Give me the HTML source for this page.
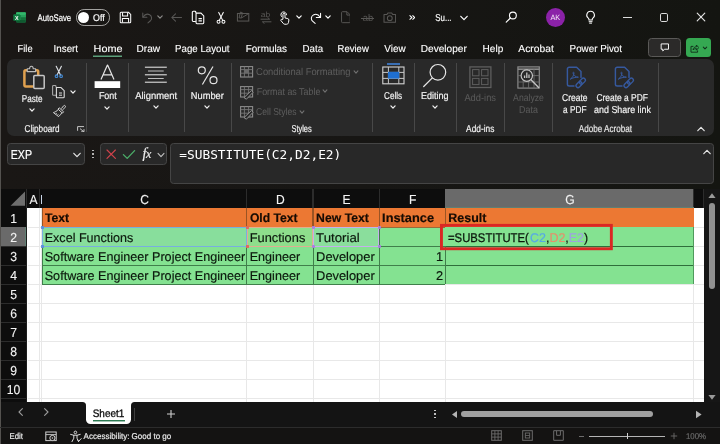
<!DOCTYPE html>
<html lang="en"><head><meta charset="utf-8"><title>Excel - SUBSTITUTE</title>
<style>
html,body{margin:0;padding:0;background:#181614;}
body{width:720px;height:444px;overflow:hidden;position:relative;font-family:"Liberation Sans",sans-serif;}
#app{position:absolute;left:0;top:0;width:720px;height:444px;overflow:hidden;will-change:transform;}
#app div,#app span.t,#app svg{position:absolute;box-sizing:border-box;}
span.t{white-space:nowrap;line-height:1;-webkit-text-stroke:0.18px currentColor;}
</style></head><body><div id="app">
<div style="left:0px;top:0px;width:720px;height:444px;background:linear-gradient(90deg,#1a1715 0%,#171614 50%,#141511 100%);"></div><div style="left:0px;top:0px;width:1px;height:444px;background:#54524f;"></div><svg style="left:13.0px;top:10.6px;" width="13.2" height="12.8" viewBox="0 0 21 17"><rect x="5" y="0.500" width="15.500" height="16" rx="1.600" fill="#1d8a4c"/><rect x="5" y="0.500" width="15.500" height="4" rx="1.200" fill="#33b86c"/><rect x="12.500" y="4.500" width="8" height="4" fill="#27a25c"/><rect x="12.500" y="8.500" width="8" height="4" fill="#15743d"/><rect x="5" y="12.500" width="15.500" height="4" rx="1.200" fill="#0f5a30"/><rect x="0.500" y="3.500" width="10.800" height="10.500" rx="1.400" fill="#107c41"/><text x="5.900" y="12.100" font-family="Liberation Sans, sans-serif" font-weight="bold" font-size="8.600" fill="#fff" text-anchor="middle">X</text></svg><span class="t" style="left:37px;top:13px;font-size:9.7px;transform-origin:0 50%;transform:matrix(0.7988,0,0.001,1,0.60,0);color:#fff;">AutoSave</span><div style="left:75.8px;top:9.4px;width:34.2px;height:16.2px;border:1px solid #a3a2a0;border-radius:8.100px;background:#181614;"></div><div style="left:78.2px;top:12.0px;width:11.2px;height:11.2px;background:#fff;border-radius:50%;"></div><span class="t" style="left:93px;top:13px;font-size:9.7px;transform-origin:0 50%;transform:matrix(0.9091,0,0.001,1,0.10,0);color:#fff;">Off</span><svg style="left:118.50px;top:11.10px;" width="13" height="13" viewBox="0 0 16 16"><path d="M2.500 1.600h9.200l2.700 2.700v9.200a1 1 0 0 1-1 1H2.500a1 1 0 0 1-1-1V2.600a1 1 0 0 1 1-1z" fill="none" stroke="#fff" stroke-width="1.250"/><path d="M4.400 1.800v4.300h6.200V1.800M4.200 14.300V9.200h7.600v5.100" fill="none" stroke="#fff" stroke-width="1.250"/></svg><svg style="left:140.50px;top:10.90px;" width="13" height="13" viewBox="0 0 16 16"><path d="M2.200 2.600v5h5" fill="none" stroke="#585755" stroke-width="1.300" stroke-linecap="round" stroke-linejoin="round"/><path d="M2.600 7.300C4.600 4.200 8 3.200 10.600 4.600c2.800 1.600 3.200 5.200 1 7.400L8.600 14.600" fill="none" stroke="#585755" stroke-width="1.300" stroke-linecap="round"/></svg><svg style="left:154.7px;top:12.0px;" width="10" height="10" viewBox="-5 -5 10 10"><path d="M-2.2 -1.15 L0 1.15 L2.2 -1.15" fill="none" stroke="#8a8987" stroke-width="1.2" stroke-linecap="round" stroke-linejoin="round"/></svg><svg style="left:169.90px;top:10.60px;" width="13" height="13" viewBox="0 0 16 16"><path d="M14.200 8H2.200M6.800 3.400L2.200 8l4.600 4.600" fill="none" stroke="#585755" stroke-width="1.300" stroke-linecap="round" stroke-linejoin="round"/></svg><svg style="left:191.30px;top:9.90px;" width="15" height="15" viewBox="0 0 16 16"><path d="M5.200 3.200V2.400a1 1 0 0 0-1-1H2.400a1 1 0 0 0-1 1v8.800a1 1 0 0 0 1 1h2.800" fill="none" stroke="#fff" stroke-width="1.150"/><path d="M5.400 3.300h5.200l3 3v7.400a1 1 0 0 1-1 1H6.400a1 1 0 0 1-1-1z" fill="#181614" stroke="#fff" stroke-width="1.150"/><path d="M8 9.200h3.600M8 11.600h3.600" stroke="#fff" stroke-width="1.100"/></svg><svg style="left:213.90px;top:10.60px;" width="14" height="14" viewBox="0 0 16 16"><path d="M5.400 1.600l4.700 9.400M10.600 1.600L5.900 11" fill="none" stroke="#fff" stroke-width="1.200" stroke-linecap="round"/><circle cx="5.200" cy="12.400" r="1.700" fill="none" stroke="#fff" stroke-width="1.150"/><circle cx="10.800" cy="12.400" r="1.700" fill="none" stroke="#fff" stroke-width="1.150"/></svg><svg style="left:236.10px;top:9.40px;" width="14.4" height="14.4" viewBox="0 0 16 16"><rect x="1.600" y="5" width="12.600" height="8.400" fill="none" stroke="#585755" stroke-width="1.150"/><path d="M3.400 9.800l1.600-6.400 2.200.8-1.400 5.800zM6 10l7.600-4.600" fill="none" stroke="#585755" stroke-width="1.050"/></svg><span class="t" style="left:260px;top:11px;font-size:7.6px;transform-origin:0 50%;transform:matrix(1.1120,0,0.001,1,0.70,0);color:#585755;-webkit-text-stroke:0;">ab</span><svg style="left:260.20px;top:16.90px;" width="12" height="7" viewBox="0 0 12 7"><path d="M1 2.200h8.600l-1.800-1.600M11 4.800H2.400l1.800 1.600" fill="none" stroke="#585755" stroke-width="1" stroke-linecap="round" stroke-linejoin="round"/></svg><svg style="left:277.90px;top:10.50px;" width="13.4" height="14.2" viewBox="0 0 17 18"><path d="M6.300 10.400V4.300a1.300 1.300 0 0 1 2.600 0v4.500l3.600.9c.9.200 1.400.9 1.300 1.800l-.5 3.200c-.2 1.300-1.200 2.100-2.500 2.100H8.700c-.8 0-1.500-.4-2-1L3.600 12c-.5-.7.300-1.600 1.100-1.200z" fill="none" stroke="#fff" stroke-width="1.250" stroke-linejoin="round"/><path d="M4.400 7a3.600 3.600 0 1 1 6.400-2.200" fill="none" stroke="#fff" stroke-width="1.250" stroke-linecap="round"/></svg><svg style="left:293.7px;top:12.0px;" width="10" height="10" viewBox="-5 -5 10 10"><path d="M-2.2 -1.15 L0 1.15 L2.2 -1.15" fill="none" stroke="#fff" stroke-width="1.2" stroke-linecap="round" stroke-linejoin="round"/></svg><svg style="left:309.30px;top:10.80px;" width="13.6" height="13.6" viewBox="0 0 16 16"><path d="M13.600 2.600v5h-5" fill="none" stroke="#fff" stroke-width="1.250" stroke-linecap="round" stroke-linejoin="round"/><path d="M13.200 7.300C11.200 4.200 7.800 3.200 5.200 4.600c-2.800 1.600-3.200 5.200-1 7.400L7.200 14.600" fill="none" stroke="#fff" stroke-width="1.250" stroke-linecap="round"/></svg><svg style="left:323.3px;top:12.0px;" width="10" height="10" viewBox="-5 -5 10 10"><path d="M-2.2 -1.15 L0 1.15 L2.2 -1.15" fill="none" stroke="#fff" stroke-width="1.2" stroke-linecap="round" stroke-linejoin="round"/></svg><svg style="left:340.60px;top:11.20px;" width="9.8" height="12.4" viewBox="0 0 11 14"><path d="M1.600 0.800h5.200l3.600 3.600v7.800a1 1 0 0 1-1 1H1.600a1 1 0 0 1-1-1V1.800a1 1 0 0 1 1-1zM6.600 1v3.600h3.600" fill="none" stroke="#585755" stroke-width="1.100"/></svg><span class="t" style="left:362px;top:13px;font-size:9.6px;transform-origin:0 50%;transform:matrix(0.9739,0,0.001,1,0.70,0);color:#585755;-webkit-text-stroke:0;">ab</span><div style="left:361.3px;top:17.6px;width:13.2px;height:1px;background:#585755;"></div><svg style="left:382.70px;top:11.70px;" width="13.6" height="11" viewBox="0 0 13.6 11.4"><path d="M0.800 2.600h3l1-1.600h4l1 1.600h3v8H0.800z" fill="none" stroke="#585755" stroke-width="1.100" stroke-linejoin="round"/><circle cx="6.800" cy="6.400" r="2.500" fill="none" stroke="#585755" stroke-width="1.100"/></svg><svg style="left:408.80px;top:15.40px;" width="6.6" height="5.0" viewBox="0 0 7.4 5.6"><path d="M1 0.800L3.200 2.800 1 4.800M4.200 0.800L6.400 2.800 4.200 4.800" fill="none" stroke="#fff" stroke-width="1.200" stroke-linecap="round" stroke-linejoin="round"/></svg><span class="t" style="left:435px;top:13px;font-size:10.0px;transform-origin:0 50%;transform:matrix(0.7877,0,0.001,1,0.30,0);color:#fff;">Su...</span><svg style="left:458.7px;top:12.5px;" width="10" height="10" viewBox="-5 -5 10 10"><path d="M-3.2 -1.7 L0 1.7 L3.2 -1.7" fill="none" stroke="#fff" stroke-width="1.2" stroke-linecap="round" stroke-linejoin="round"/></svg><svg style="left:505.00px;top:11.30px;" width="12.4" height="12.4" viewBox="0 0 16 16"><circle cx="10.200" cy="5.800" r="4.400" fill="none" stroke="#fff" stroke-width="1.450"/><path d="M7 9L1.600 14.400" stroke="#fff" stroke-width="1.500" stroke-linecap="round"/></svg><div style="left:545.7px;top:8.2px;width:19px;height:18.8px;background:#8b22a8;border-radius:50%;"></div><span class="t" style="left:550px;top:14px;font-size:7.6px;transform-origin:0 50%;transform:matrix(0.9666,0,0.001,1,0.40,0);color:#f4e8f8;-webkit-text-stroke:0;">AK</span><svg style="left:584.2px;top:10.2px;" width="13.2" height="14.8" viewBox="0 0 16 18"><path d="M8 1.600a4.600 4.600 0 0 0-2.800 8.300c.5.400.8 1 .8 1.600v.7h4v-.7c0-.6.300-1.200.8-1.600A4.600 4.600 0 0 0 8 1.600z" fill="none" stroke="#fff" stroke-width="1.300"/><path d="M6.200 14.200h3.600M6.800 16h2.400" stroke="#fff" stroke-width="1.200" stroke-linecap="round"/></svg><div style="left:623px;top:17px;width:8.5px;height:1.1px;background:#dcdcdc;"></div><div style="left:659.8px;top:13.3px;width:8.6px;height:8.6px;border:1.15px solid #dcdcdc;border-radius:1.8px;"></div><svg style="left:696.2px;top:12.3px;" width="10" height="10" viewBox="0 0 10 10"><path d="M1.200 1.200l7.600 7.600M8.800 1.200L1.200 8.800" stroke="#e4e4e4" stroke-width="1.150" stroke-linecap="round"/></svg><span class="t" style="left:17px;top:44px;font-size:10.2px;transform-origin:0 50%;transform:matrix(0.9126,0,0.001,1,0.60,0);color:#fff;-webkit-text-stroke:0.12px currentColor;">File</span><span class="t" style="left:53px;top:44px;font-size:10.2px;transform-origin:0 50%;transform:matrix(0.9604,0,0.001,1,0.60,0);color:#fff;-webkit-text-stroke:0.12px currentColor;">Insert</span><span class="t" style="left:93px;top:44px;font-size:10.2px;transform-origin:0 50%;transform:matrix(1.0658,0,0.001,1,0.60,0);color:#fff;-webkit-text-stroke:0.12px currentColor;">Home</span><span class="t" style="left:136px;top:44px;font-size:10.2px;transform-origin:0 50%;transform:matrix(0.9873,0,0.001,1,0.60,0);color:#fff;-webkit-text-stroke:0.12px currentColor;">Draw</span><span class="t" style="left:175px;top:44px;font-size:10.2px;transform-origin:0 50%;transform:matrix(0.9515,0,0.001,1,0.10,0);color:#fff;-webkit-text-stroke:0.12px currentColor;">Page Layout</span><span class="t" style="left:245px;top:44px;font-size:10.2px;transform-origin:0 50%;transform:matrix(0.9716,0,0.001,1,0.80,0);color:#fff;-webkit-text-stroke:0.12px currentColor;">Formulas</span><span class="t" style="left:302px;top:44px;font-size:10.2px;transform-origin:0 50%;transform:matrix(0.9515,0,0.001,1,0.60,0);color:#fff;-webkit-text-stroke:0.12px currentColor;">Data</span><span class="t" style="left:337px;top:44px;font-size:10.2px;transform-origin:0 50%;transform:matrix(0.9329,0,0.001,1,0.60,0);color:#fff;-webkit-text-stroke:0.12px currentColor;">Review</span><span class="t" style="left:384px;top:44px;font-size:10.2px;transform-origin:0 50%;transform:matrix(0.9715,0,0.001,1,0.30,0);color:#fff;-webkit-text-stroke:0.12px currentColor;">View</span><span class="t" style="left:420px;top:44px;font-size:10.2px;transform-origin:0 50%;transform:matrix(0.9894,0,0.001,1,0.80,0);color:#fff;-webkit-text-stroke:0.12px currentColor;">Developer</span><span class="t" style="left:482px;top:44px;font-size:10.2px;transform-origin:0 50%;transform:matrix(0.9868,0,0.001,1,0.60,0);color:#fff;-webkit-text-stroke:0.12px currentColor;">Help</span><span class="t" style="left:518px;top:44px;font-size:10.2px;transform-origin:0 50%;transform:matrix(1.0099,0,0.001,1,0.30,0);color:#fff;-webkit-text-stroke:0.12px currentColor;">Acrobat</span><span class="t" style="left:569px;top:44px;font-size:10.2px;transform-origin:0 50%;transform:matrix(0.9647,0,0.001,1,0.60,0);color:#fff;-webkit-text-stroke:0.12px currentColor;">Power Pivot</span><div style="left:93px;top:55px;width:29px;height:1px;background:rgba(91,159,122,0.5);"></div><div style="left:93px;top:56px;width:29px;height:1px;background:#5b9f7a;"></div><div style="left:648.2px;top:38.2px;width:32.4px;height:18.8px;background:#2b2a29;border:1px solid #5a5957;border-radius:3.5px;"></div><svg style="left:658.8px;top:42px;" width="12" height="11.2" viewBox="0 0 14 13"><path d="M2.500 2.200h8.600v6.200H6.600L4.400 10.400V8.400H2.500z" fill="none" stroke="#fff" stroke-width="1.100" stroke-linejoin="round"/></svg><div style="left:686.3px;top:38.3px;width:25px;height:18.6px;background:#35a852;border-radius:3.500px;"></div><svg style="left:689.6px;top:42.8px;" width="9.4" height="10" viewBox="0 0 9.4 10"><path d="M3.400 3.400H1v5.800h6.600V7.400M3 6.800c.4-2 1.600-3 3.400-3V2l2.400 2.600L6.400 7.200V5.600C4.800 5.600 3.800 6 3 6.800z" fill="none" stroke="#12301c" stroke-width="0.950" stroke-linejoin="round"/></svg><svg style="left:700.4px;top:42.9px;" width="10" height="10" viewBox="-5 -5 10 10"><path d="M-1.7 -0.95 L0 0.95 L1.7 -0.95" fill="none" stroke="#12301c" stroke-width="1.05" stroke-linecap="round" stroke-linejoin="round"/></svg><div style="left:7px;top:59px;width:706.5px;height:77.3px;background:#292929;border-radius:7px;"></div><div style="left:85.9px;top:63px;width:1px;height:69px;background:#484848;"></div><div style="left:128.1px;top:63px;width:1px;height:69px;background:#484848;"></div><div style="left:183.8px;top:63px;width:1px;height:69px;background:#484848;"></div><div style="left:230.5px;top:63px;width:1px;height:69px;background:#484848;"></div><div style="left:371.8px;top:63px;width:1px;height:69px;background:#484848;"></div><div style="left:414.0px;top:63px;width:1px;height:69px;background:#484848;"></div><div style="left:456.0px;top:63px;width:1px;height:69px;background:#484848;"></div><div style="left:504.0px;top:63px;width:1px;height:69px;background:#484848;"></div><div style="left:551.6px;top:63px;width:1px;height:69px;background:#484848;"></div><div style="left:658.0px;top:63px;width:1px;height:69px;background:#484848;"></div><svg style="left:20px;top:63px;" width="28" height="28" viewBox="0 0 28 28"><rect x="4.400" y="7.200" width="13.800" height="16.200" rx="1.300" fill="none" stroke="#e0a14f" stroke-width="2.500"/><path d="M7.200 8.600V5.800h2.400c0-1.700.8-2.500 1.800-2.500s1.800.8 1.800 2.500h2.400v2.800z" fill="#292929" stroke="#bdbdbd" stroke-width="1.100" stroke-linejoin="round"/><rect x="13.800" y="12.600" width="10.400" height="12.800" rx="1" fill="#2a2a2a" stroke="#c6c6c6" stroke-width="1.500"/></svg><span class="t" style="left:21px;top:94px;font-size:10.0px;transform-origin:0 50%;transform:matrix(0.8134,0,0.001,1,0.80,0);color:#f4f4f4;">Paste</span><svg style="left:26.7px;top:105.0px;" width="10" height="10" viewBox="-5 -5 10 10"><path d="M-2.1 -1.15 L0 1.15 L2.1 -1.15" fill="none" stroke="#f0f0f0" stroke-width="1.25" stroke-linecap="round" stroke-linejoin="round"/></svg><svg style="left:52px;top:65px;" width="14" height="14" viewBox="0 0 14 14"><path d="M4.200 1.200l4.300 8.900M9.400 1.200L5.100 10.100" fill="none" stroke="#dfe3e8" stroke-width="1.100" stroke-linecap="round"/><circle cx="4.500" cy="11.200" r="1.300" fill="none" stroke="#438cd8" stroke-width="1.100"/><circle cx="9.100" cy="11.200" r="1.300" fill="none" stroke="#438cd8" stroke-width="1.100"/></svg><svg style="left:51px;top:84px;" width="16" height="15" viewBox="0 0 16 15"><path d="M5 3.200V2.400a.9.9 0 0 0-.9-.9H2.500a.9.9 0 0 0-.9.9v8a.9.9 0 0 0 .9.900H5" fill="none" stroke="#a8a8a8" stroke-width="1.100"/><path d="M5.400 3.500h4.600l3.200 3.200v6.200a.9.9 0 0 1-.9.900H6.300a.9.9 0 0 1-.9-.9z" fill="#292929" stroke="#dcdcdc" stroke-width="1.100"/><path d="M8 9h3M8 11.200h3" stroke="#dcdcdc" stroke-width="1"/></svg><svg style="left:68.4px;top:87.0px;" width="10" height="10" viewBox="-5 -5 10 10"><path d="M-2.1 -1.15 L0 1.15 L2.1 -1.15" fill="none" stroke="#f0f0f0" stroke-width="1.25" stroke-linecap="round" stroke-linejoin="round"/></svg><svg style="left:52px;top:104px;" width="15" height="14" viewBox="0 0 15 14"><path d="M9.400 4.600l2.200-2.800c.4-.5 1.200-.5 1.600 0 .4.400.4 1 0 1.400l-2.400 2.600" fill="none" stroke="#d4d4d4" stroke-width="1" stroke-linejoin="round"/><path d="M7.200 3.800l4.400 4-1.200 1.300-4.400-4z" fill="none" stroke="#d4d4d4" stroke-width="1" stroke-linejoin="round"/><path d="M6.200 5.600c-1.600 1.600-3 2.400-4.800 3l5.200 4c1.400-1.200 2.400-2.400 3.200-3.800" fill="none" stroke="#d4d4d4" stroke-width="1" stroke-linejoin="round"/><path d="M3.400 10l1.600-.8M5 11.400l1.600-1" fill="none" stroke="#bdbdbd" stroke-width="0.800"/></svg><span class="t" style="left:24px;top:124px;font-size:10.0px;transform-origin:0 50%;transform:matrix(0.8177,0,0.001,1,0.50,0);color:#f4f4f4;">Clipboard</span><svg style="left:76.6px;top:126px;" width="8.4" height="6.4" viewBox="0 0 8.4 6.4"><path d="M0.600 4.800V0.600h6.400M3 2.600l3.600 3M7 3.200v2.600H4.200" fill="none" stroke="#d8d8d8" stroke-width="0.900"/></svg><svg style="left:94px;top:64px;" width="27" height="25" viewBox="0 0 27 25"><path d="M7 15.600L13.300 1.200h.4l6.300 14.400M9.300 10.800h8.400" fill="none" stroke="#e6e6e6" stroke-width="1.200" stroke-linejoin="round"/><rect x="0.600" y="17.200" width="25.600" height="6.800" fill="#fff"/></svg><span class="t" style="left:98px;top:91px;font-size:10.0px;transform-origin:0 50%;transform:matrix(0.8946,0,0.001,1,0.90,0);color:#f4f4f4;">Font</span><svg style="left:102.0px;top:102.6px;" width="10" height="10" viewBox="-5 -5 10 10"><path d="M-2.1 -1.15 L0 1.15 L2.1 -1.15" fill="none" stroke="#f0f0f0" stroke-width="1.25" stroke-linecap="round" stroke-linejoin="round"/></svg><svg style="left:144px;top:65px;" width="24" height="20" viewBox="0 0 24 20"><path d="M0.9 2.2H22.8" stroke="#e8e8e8" stroke-width="1.050"/><path d="M4.0 6.0H19.7" stroke="#bdbdbd" stroke-width="1.050"/><path d="M0.9 9.8H22.8" stroke="#e8e8e8" stroke-width="1.050"/><path d="M4.0 13.5H19.7" stroke="#bdbdbd" stroke-width="1.050"/><path d="M0.9 17.2H22.8" stroke="#e8e8e8" stroke-width="1.050"/></svg><span class="t" style="left:135px;top:91px;font-size:10.0px;transform-origin:0 50%;transform:matrix(0.9422,0,0.001,1,0.20,0);color:#f4f4f4;">Alignment</span><svg style="left:150.5px;top:102.4px;" width="10" height="10" viewBox="-5 -5 10 10"><path d="M-2.1 -1.15 L0 1.15 L2.1 -1.15" fill="none" stroke="#f0f0f0" stroke-width="1.25" stroke-linecap="round" stroke-linejoin="round"/></svg><svg style="left:196px;top:64px;" width="24" height="24" viewBox="0 0 24 24"><circle cx="5.800" cy="6.300" r="3.500" fill="none" stroke="#e6e6e6" stroke-width="1.200"/><circle cx="17.500" cy="16.200" r="3.500" fill="none" stroke="#e6e6e6" stroke-width="1.200"/><path d="M17 2.500L6.400 20.500" stroke="#e6e6e6" stroke-width="1.200"/></svg><span class="t" style="left:190px;top:91px;font-size:10.0px;transform-origin:0 50%;transform:matrix(0.9278,0,0.001,1,0.80,0);color:#f4f4f4;">Number</span><svg style="left:202.0px;top:102.4px;" width="10" height="10" viewBox="-5 -5 10 10"><path d="M-2.1 -1.15 L0 1.15 L2.1 -1.15" fill="none" stroke="#f0f0f0" stroke-width="1.25" stroke-linecap="round" stroke-linejoin="round"/></svg><svg style="left:240px;top:66px;" width="15" height="14" viewBox="0 0 15 14"><rect x="0.600" y="0.600" width="12" height="10.400" fill="none" stroke="#8c8c8c" stroke-width="1.100"/><path d="M0.600 3.600h12M0.600 7.200h12M4.400 0.600v10.400M8.600 0.600v10.400" stroke="#777" stroke-width="0.900"/><rect x="4.400" y="3.600" width="4.200" height="3.600" fill="#6a6a6a"/></svg><svg style="left:240px;top:85.8px;" width="15" height="14" viewBox="0 0 15 14"><rect x="0.600" y="0.600" width="12" height="10.400" fill="none" stroke="#8c8c8c" stroke-width="1.100"/><path d="M0.600 3.600h12M0.600 7.200h12M4.400 0.600v10.400M8.600 0.600v10.400" stroke="#777" stroke-width="0.900"/><path d="M4 11.600l7.400-7 1.800 1.600-6.800 7z" fill="#292929" stroke="#9a9a9a" stroke-width="0.900"/></svg><svg style="left:240px;top:106px;" width="15" height="14" viewBox="0 0 15 14"><rect x="0.600" y="0.600" width="12" height="10.400" fill="none" stroke="#8c8c8c" stroke-width="1.100"/><path d="M0.600 3.600h12M0.600 7.200h12M4.400 0.600v10.400M8.600 0.600v10.400" stroke="#777" stroke-width="0.900"/><path d="M4 11.600l7.400-7 1.800 1.600-6.800 7z" fill="#292929" stroke="#9a9a9a" stroke-width="0.900"/></svg><span class="t" style="left:256px;top:67px;font-size:10.0px;transform-origin:0 50%;transform:matrix(0.9383,0,0.001,1,0.10,0);color:#5d5d5d;-webkit-text-stroke:0.05px currentColor;">Conditional Formatting</span><svg style="left:351.3px;top:66.5px;" width="10" height="10" viewBox="-5 -5 10 10"><path d="M-1.9 -1.05 L0 1.05 L1.9 -1.05" fill="none" stroke="#707070" stroke-width="1.1" stroke-linecap="round" stroke-linejoin="round"/></svg><span class="t" style="left:256px;top:87px;font-size:10.0px;transform-origin:0 50%;transform:matrix(0.8907,0,0.001,1,0.70,0);color:#5d5d5d;-webkit-text-stroke:0.05px currentColor;">Format as Table</span><svg style="left:320.4px;top:86.4px;" width="10" height="10" viewBox="-5 -5 10 10"><path d="M-1.9 -1.05 L0 1.05 L1.9 -1.05" fill="none" stroke="#707070" stroke-width="1.1" stroke-linecap="round" stroke-linejoin="round"/></svg><span class="t" style="left:256px;top:107px;font-size:10.0px;transform-origin:0 50%;transform:matrix(0.8532,0,0.001,1,0.10,0);color:#5d5d5d;-webkit-text-stroke:0.05px currentColor;">Cell Styles</span><svg style="left:296.6px;top:106.6px;" width="10" height="10" viewBox="-5 -5 10 10"><path d="M-1.9 -1.05 L0 1.05 L1.9 -1.05" fill="none" stroke="#707070" stroke-width="1.1" stroke-linecap="round" stroke-linejoin="round"/></svg><span class="t" style="left:291px;top:124px;font-size:10.0px;transform-origin:0 50%;transform:matrix(0.7418,0,0.001,1,0.50,0);color:#f4f4f4;">Styles</span><svg style="left:382px;top:62px;" width="23" height="23" viewBox="0 0 23 23"><path d="M5 2h13" stroke="#3a6fb4" stroke-width="2"/><rect x="0.800" y="5" width="21.200" height="16.800" fill="none" stroke="#d4d4d4" stroke-width="1.100"/><path d="M0.800 10.400h21.200M0.800 16.400h21.200M6.400 5v16.800M16.800 5v16.800" stroke="#c8c8c8" stroke-width="1"/><rect x="6" y="9.800" width="11.200" height="6.800" fill="#1f6fd0"/></svg><span class="t" style="left:384px;top:91px;font-size:10.0px;transform-origin:0 50%;transform:matrix(0.8098,0,0.001,1,0.10,0);color:#f4f4f4;">Cells</span><svg style="left:388.1px;top:102.4px;" width="10" height="10" viewBox="-5 -5 10 10"><path d="M-2.1 -1.15 L0 1.15 L2.1 -1.15" fill="none" stroke="#f0f0f0" stroke-width="1.25" stroke-linecap="round" stroke-linejoin="round"/></svg><svg style="left:422px;top:63px;" width="26" height="26" viewBox="0 0 26 26"><circle cx="15.900" cy="9.300" r="7.800" fill="none" stroke="#e6e6e6" stroke-width="1.200"/><path d="M10.100 15.100L1.700 23.500" stroke="#e6e6e6" stroke-width="1.250" stroke-linecap="round"/></svg><span class="t" style="left:420px;top:91px;font-size:10.0px;transform-origin:0 50%;transform:matrix(0.8994,0,0.001,1,0.90,0);color:#f4f4f4;">Editing</span><svg style="left:429.7px;top:102.4px;" width="10" height="10" viewBox="-5 -5 10 10"><path d="M-2.1 -1.15 L0 1.15 L2.1 -1.15" fill="none" stroke="#f0f0f0" stroke-width="1.25" stroke-linecap="round" stroke-linejoin="round"/></svg><svg style="left:469px;top:65.5px;" width="23" height="23" viewBox="0 0 23 23"><rect x="0.900" y="0.900" width="21" height="20.600" fill="none" stroke="#5e5e5e" stroke-width="1.300"/><rect x="3.600" y="3.600" width="6.400" height="6.200" fill="none" stroke="#5e5e5e" stroke-width="1"/><rect x="12.600" y="3.600" width="6.400" height="6.200" fill="none" stroke="#5e5e5e" stroke-width="1"/><rect x="3.600" y="12.400" width="6.400" height="6.200" fill="none" stroke="#5e5e5e" stroke-width="1"/><rect x="12.600" y="12.400" width="6.400" height="6.200" fill="none" stroke="#5e5e5e" stroke-width="1"/></svg><span class="t" style="left:464px;top:93px;font-size:10.0px;transform-origin:0 50%;transform:matrix(0.9320,0,0.001,1,0.40,0);color:#5a5a5a;-webkit-text-stroke:0.05px currentColor;">Add-ins</span><span class="t" style="left:466px;top:124px;font-size:10.0px;transform-origin:0 50%;transform:matrix(0.8317,0,0.001,1,0.10,0);color:#f4f4f4;">Add-ins</span><svg style="left:517px;top:65.5px;" width="24" height="24" viewBox="0 0 24 24"><rect x="0.900" y="0.900" width="21.400" height="21.200" fill="none" stroke="#8a8a8a" stroke-width="1.200"/><path d="M0.900 3.200h21.400" stroke="#8a8a8a" stroke-width="1.600"/><path d="M0.900 9.600h21.400M0.900 16h21.400M6.200 3.200v18.900M11.600 3.200v18.900M17 3.200v18.900" stroke="#6c6c6c" stroke-width="0.900"/><circle cx="9.800" cy="9.600" r="5.700" fill="#292929" stroke="#c4c4c4" stroke-width="1.200"/><path d="M7.600 12V9.600M9.800 12V6.600M12 12V8.400" stroke="#c4c4c4" stroke-width="1.300"/><path d="M14 13.800l7.600 7.600" stroke="#c4c4c4" stroke-width="1.400" stroke-linecap="round"/></svg><span class="t" style="left:513px;top:93px;font-size:10.0px;transform-origin:0 50%;transform:matrix(0.8657,0,0.001,1,0.10,0);color:#5a5a5a;-webkit-text-stroke:0.05px currentColor;">Analyze</span><span class="t" style="left:519px;top:105px;font-size:10.0px;transform-origin:0 50%;transform:matrix(0.8900,0,0.001,1,0.10,0);color:#5a5a5a;-webkit-text-stroke:0.05px currentColor;">Data</span><svg style="left:566.3px;top:66px;" width="23" height="24" viewBox="0 0 23 24"><path d="M8 20H3.200a1.800 1.800 0 0 1-1.800-1.800V3a1.800 1.800 0 0 1 1.800-1.800h7.400l4.400 4.400v6" fill="none" stroke="#36599f" stroke-width="1.450" stroke-linejoin="round" stroke-linecap="round"/><path d="M4.600 13c2-1.400 3.400-4 3.400-6.200 0-.8-1-.8-1 0 0 2 2.400 4.400 5 4.400M4.600 13c2-1.200 4.800-1.800 7.400-1.800" fill="none" stroke="#36599f" stroke-width="1" stroke-linecap="round"/><rect x="9.600" y="16.600" width="6.800" height="4" rx="2" transform="rotate(-45 13 18.600)" fill="none" stroke="#36599f" stroke-width="1.350"/><rect x="13" y="13.200" width="6.800" height="4" rx="2" transform="rotate(-45 16.400 15.200)" fill="none" stroke="#36599f" stroke-width="1.350"/></svg><svg style="left:614.2px;top:66px;" width="23" height="24" viewBox="0 0 23 24"><path d="M8 20H3.200a1.800 1.800 0 0 1-1.800-1.800V3a1.800 1.800 0 0 1 1.800-1.800h7.400l4.400 4.400v6" fill="none" stroke="#36599f" stroke-width="1.450" stroke-linejoin="round" stroke-linecap="round"/><path d="M4.600 13c2-1.400 3.400-4 3.400-6.200 0-.8-1-.8-1 0 0 2 2.400 4.400 5 4.400M4.600 13c2-1.200 4.800-1.800 7.400-1.800" fill="none" stroke="#36599f" stroke-width="1" stroke-linecap="round"/><rect x="9.600" y="16.600" width="6.800" height="4" rx="2" transform="rotate(-45 13 18.600)" fill="none" stroke="#36599f" stroke-width="1.350"/><rect x="13" y="13.200" width="6.800" height="4" rx="2" transform="rotate(-45 16.400 15.200)" fill="none" stroke="#36599f" stroke-width="1.350"/></svg><span class="t" style="left:562px;top:93px;font-size:10.0px;transform-origin:0 50%;transform:matrix(0.8496,0,0.001,1,0.00,0);color:#f4f4f4;">Create</span><span class="t" style="left:563px;top:105px;font-size:10.0px;transform-origin:0 50%;transform:matrix(0.8257,0,0.001,1,0.10,0);color:#f4f4f4;">a PDF</span><span class="t" style="left:596px;top:93px;font-size:10.0px;transform-origin:0 50%;transform:matrix(0.8424,0,0.001,1,0.40,0);color:#f4f4f4;">Create a PDF</span><span class="t" style="left:594px;top:105px;font-size:10.0px;transform-origin:0 50%;transform:matrix(0.8885,0,0.001,1,0.10,0);color:#f4f4f4;">and Share link</span><span class="t" style="left:578px;top:124px;font-size:10.0px;transform-origin:0 50%;transform:matrix(0.8124,0,0.001,1,0.80,0);color:#e6e6e6;">Adobe Acrobat</span><svg style="left:695.5px;top:123.80000000000001px;" width="10" height="10" viewBox="-5 -5 10 10"><path d="M-3.2 1.7 L0 -1.7 L3.2 1.7" fill="none" stroke="#e6e6e6" stroke-width="1.2" stroke-linecap="round" stroke-linejoin="round"/></svg><div style="left:7px;top:143px;width:78px;height:21.6px;background:#282828;border:1px solid #454545;border-radius:3.5px;"></div><span class="t" style="left:10px;top:148px;font-size:13.0px;transform-origin:0 50%;transform:matrix(0.8227,0,0.001,1,0.70,0);color:#fff;">EXP</span><svg style="left:71.5px;top:149.8px;" width="10" height="10" viewBox="-5 -5 10 10"><path d="M-3.2 -1.7 L0 1.7 L3.2 -1.7" fill="none" stroke="#e6e6e6" stroke-width="1.2" stroke-linecap="round" stroke-linejoin="round"/></svg><div style="left:92.3px;top:149.9px;width:1.5px;height:1.5px;background:#d0d0d0;border-radius:50%;"></div><div style="left:92.3px;top:153.3px;width:1.5px;height:1.5px;background:#d0d0d0;border-radius:50%;"></div><div style="left:92.3px;top:156.70000000000002px;width:1.5px;height:1.5px;background:#d0d0d0;border-radius:50%;"></div><div style="left:100.3px;top:143px;width:66.5px;height:21.6px;background:#282828;border:1px solid #454545;border-radius:3.5px;"></div><svg style="left:105.5px;top:149px;" width="10.5" height="10.5" viewBox="0 0 10.5 10.5"><path d="M1 1l8.400 8.400M9.400 1L1 9.400" stroke="#d0424b" stroke-width="1.150" stroke-linecap="round"/></svg><svg style="left:122px;top:148.6px;" width="14" height="11" viewBox="0 0 14 11"><path d="M1.400 5.600l3.800 3.800L12.600 1.600" fill="none" stroke="#4caf6a" stroke-width="1.300" stroke-linecap="round" stroke-linejoin="round"/></svg><span class="t" style="left:142.6px;top:145.6px;font-size:14.5px;color:#ececec;font-family:'Liberation Serif',serif;font-style:italic;letter-spacing:-0.6px;">f<span style="font-size:12px;">x</span></span><svg style="left:156.2px;top:149.6px;" width="10" height="10" viewBox="-5 -5 10 10"><path d="M-3.0 -1.6 L0 1.6 L3.0 -1.6" fill="none" stroke="#c4c4c4" stroke-width="1.05" stroke-linecap="round" stroke-linejoin="round"/></svg><div style="left:170px;top:143px;width:543.6px;height:41px;background:#282828;border:1px solid #454545;border-radius:3.5px;"></div><span class="t" style="left:179.3px;top:148.6px;font-size:12.82px;color:#fff;font-family:'DejaVu Sans Mono','Liberation Mono',monospace;-webkit-text-stroke:0;">=SUBSTITUTE(C2,D2,E2)</span><svg style="left:701.5px;top:147.0px;" width="10" height="10" viewBox="-5 -5 10 10"><path d="M-3.2 1.7 L0 -1.7 L3.2 1.7" fill="none" stroke="#e6e6e6" stroke-width="1.2" stroke-linecap="round" stroke-linejoin="round"/></svg><div style="left:1px;top:188.8px;width:703.2px;height:19.19999999999999px;background:#0d0d0d;"></div><div style="left:1px;top:188.8px;width:25.4px;height:213.2px;background:#0d0d0d;"></div><div style="left:26.4px;top:208.0px;width:677.8000000000001px;height:194.0px;background:#fff;"></div><div style="left:27.9px;top:226.53px;width:676.3000000000001px;height:1px;background:#e8e8e8;"></div><div style="left:27.9px;top:245.56px;width:676.3000000000001px;height:1px;background:#e8e8e8;"></div><div style="left:27.9px;top:264.59000000000003px;width:676.3000000000001px;height:1px;background:#e8e8e8;"></div><div style="left:27.9px;top:283.62px;width:676.3000000000001px;height:1px;background:#e8e8e8;"></div><div style="left:27.9px;top:302.65px;width:676.3000000000001px;height:1px;background:#e8e8e8;"></div><div style="left:27.9px;top:321.68px;width:676.3000000000001px;height:1px;background:#e8e8e8;"></div><div style="left:27.9px;top:340.71000000000004px;width:676.3000000000001px;height:1px;background:#e8e8e8;"></div><div style="left:27.9px;top:359.74px;width:676.3000000000001px;height:1px;background:#e8e8e8;"></div><div style="left:27.9px;top:378.77px;width:676.3000000000001px;height:1px;background:#e8e8e8;"></div><div style="left:27.9px;top:397.8px;width:676.3000000000001px;height:1px;background:#e8e8e8;"></div><div style="left:39.2px;top:208.0px;width:1px;height:194.0px;background:#e8e8e8;"></div><div style="left:41.4px;top:208.0px;width:1px;height:194.0px;background:#e8e8e8;"></div><div style="left:246.2px;top:208.0px;width:1px;height:194.0px;background:#e8e8e8;"></div><div style="left:312.5px;top:208.0px;width:1px;height:194.0px;background:#e8e8e8;"></div><div style="left:378.8px;top:208.0px;width:1px;height:194.0px;background:#e8e8e8;"></div><div style="left:444.9px;top:208.0px;width:1px;height:194.0px;background:#e8e8e8;"></div><div style="left:693.1px;top:208.0px;width:1px;height:194.0px;background:#e8e8e8;"></div><div style="left:703.7px;top:208.0px;width:1px;height:194.0px;background:#e8e8e8;"></div><div style="left:1px;top:226.53px;width:25.4px;height:1px;background:#2c2c2c;"></div><span class="t" style="left:10px;top:212px;font-size:13.0px;transform-origin:0 50%;transform:matrix(0.9400,0,0.001,1,0.20,0);color:#f4f4f4;-webkit-text-stroke:0.1px currentColor;">1</span><div style="left:1px;top:227.03px;width:25.4px;height:19.03px;background:#6a6a6a;"></div><div style="left:1px;top:245.56px;width:25.4px;height:1px;background:#2c2c2c;"></div><span class="t" style="left:10px;top:231px;font-size:13.0px;transform-origin:0 50%;transform:matrix(0.9400,0,0.001,1,0.20,0);color:#f4f4f4;-webkit-text-stroke:0.1px currentColor;">2</span><div style="left:1px;top:264.59000000000003px;width:25.4px;height:1px;background:#2c2c2c;"></div><span class="t" style="left:10px;top:250px;font-size:13.0px;transform-origin:0 50%;transform:matrix(0.9400,0,0.001,1,0.20,0);color:#f4f4f4;-webkit-text-stroke:0.1px currentColor;">3</span><div style="left:1px;top:283.62px;width:25.4px;height:1px;background:#2c2c2c;"></div><span class="t" style="left:10px;top:269px;font-size:13.0px;transform-origin:0 50%;transform:matrix(0.9400,0,0.001,1,0.20,0);color:#f4f4f4;-webkit-text-stroke:0.1px currentColor;">4</span><div style="left:1px;top:302.65px;width:25.4px;height:1px;background:#2c2c2c;"></div><span class="t" style="left:10px;top:288px;font-size:13.0px;transform-origin:0 50%;transform:matrix(0.9400,0,0.001,1,0.20,0);color:#f4f4f4;-webkit-text-stroke:0.1px currentColor;">5</span><div style="left:1px;top:321.67999999999995px;width:25.4px;height:1px;background:#2c2c2c;"></div><span class="t" style="left:10px;top:307px;font-size:13.0px;transform-origin:0 50%;transform:matrix(0.9400,0,0.001,1,0.20,0);color:#f4f4f4;-webkit-text-stroke:0.1px currentColor;">6</span><div style="left:1px;top:340.71000000000004px;width:25.4px;height:1px;background:#2c2c2c;"></div><span class="t" style="left:10px;top:326px;font-size:13.0px;transform-origin:0 50%;transform:matrix(0.9400,0,0.001,1,0.20,0);color:#f4f4f4;-webkit-text-stroke:0.1px currentColor;">7</span><div style="left:1px;top:359.74px;width:25.4px;height:1px;background:#2c2c2c;"></div><span class="t" style="left:10px;top:345px;font-size:13.0px;transform-origin:0 50%;transform:matrix(0.9400,0,0.001,1,0.20,0);color:#f4f4f4;-webkit-text-stroke:0.1px currentColor;">8</span><div style="left:1px;top:378.77px;width:25.4px;height:1px;background:#2c2c2c;"></div><span class="t" style="left:10px;top:364px;font-size:13.0px;transform-origin:0 50%;transform:matrix(0.9400,0,0.001,1,0.20,0);color:#f4f4f4;-webkit-text-stroke:0.1px currentColor;">9</span><div style="left:1px;top:397.79999999999995px;width:25.4px;height:1px;background:#2c2c2c;"></div><span class="t" style="left:6px;top:383px;font-size:13.0px;transform-origin:0 50%;transform:matrix(0.9400,0,0.001,1,0.80,0);color:#f4f4f4;-webkit-text-stroke:0.1px currentColor;">10</span><div style="left:25.799999999999997px;top:208.0px;width:0.9px;height:194.0px;background:#1e1e1e;"></div><div style="left:38.95px;top:188.8px;width:1.5px;height:19.19999999999999px;background:#2c2c2c;"></div><span class="t" style="left:29px;top:193px;font-size:13.0px;transform-origin:0 50%;transform:matrix(0.9300,0,0.001,1,0.62,0);color:#f4f4f4;-webkit-text-stroke:0.1px currentColor;">A</span><div style="left:245.95px;top:188.8px;width:1.5px;height:19.19999999999999px;background:#2c2c2c;"></div><span class="t" style="left:140px;top:193px;font-size:13.0px;transform-origin:0 50%;transform:matrix(0.9300,0,0.001,1,0.33,0);color:#f4f4f4;-webkit-text-stroke:0.1px currentColor;">C</span><div style="left:312.25px;top:188.8px;width:1.5px;height:19.19999999999999px;background:#2c2c2c;"></div><span class="t" style="left:275px;top:193px;font-size:13.0px;transform-origin:0 50%;transform:matrix(0.9300,0,0.001,1,0.88,0);color:#f4f4f4;-webkit-text-stroke:0.1px currentColor;">D</span><div style="left:378.55px;top:188.8px;width:1.5px;height:19.19999999999999px;background:#2c2c2c;"></div><span class="t" style="left:342px;top:193px;font-size:13.0px;transform-origin:0 50%;transform:matrix(0.9300,0,0.001,1,0.52,0);color:#f4f4f4;-webkit-text-stroke:0.1px currentColor;">E</span><div style="left:444.65px;top:188.8px;width:1.5px;height:19.19999999999999px;background:#2c2c2c;"></div><span class="t" style="left:409px;top:193px;font-size:13.0px;transform-origin:0 50%;transform:matrix(0.9300,0,0.001,1,0.06,0);color:#f4f4f4;-webkit-text-stroke:0.1px currentColor;">F</span><div style="left:445.4px;top:188.8px;width:248.20000000000005px;height:19.19999999999999px;background:#6a6a6a;"></div><div style="left:692.85px;top:188.8px;width:1.5px;height:19.19999999999999px;background:#2c2c2c;"></div><span class="t" style="left:565px;top:193px;font-size:13.0px;transform-origin:0 50%;transform:matrix(0.9300,0,0.001,1,0.20,0);color:#f4f4f4;-webkit-text-stroke:0.1px currentColor;">G</span><div style="left:703.45px;top:188.8px;width:1.5px;height:19.19999999999999px;background:#2c2c2c;"></div><div style="left:25.65px;top:188.8px;width:1.5px;height:19.19999999999999px;background:#2c2c2c;"></div><div style="left:445.4px;top:206.5px;width:248.2px;height:1.1px;background:#5f7f72;"></div><div style="left:25.099999999999998px;top:227.03px;width:1.1px;height:19.03px;background:#5f7f72;"></div><div style="left:40.6px;top:194.6px;width:1.1px;height:9.2px;background:#c8d4e6;"></div><div style="left:39.2px;top:188.8px;width:0.9px;height:19.19999999999999px;background:#2c2c2c;"></div><svg style="left:8px;top:189px;" width="18" height="18" viewBox="0 0 18 18"><path d="M17 2.6V16.8H2.6z" fill="#6e6e6e"/></svg><div style="left:42.2px;top:208.0px;width:651.4px;height:19.03px;background:#ec7833;"></div><div style="left:42.2px;top:227.03px;width:651.4px;height:57.09px;background:#84e291;"></div><div style="left:42.2px;top:227.03px;width:204.5px;height:19.03px;background:#88de9c;"></div><div style="left:246.7px;top:227.03px;width:66.3px;height:19.03px;background:#8ede8c;"></div><div style="left:313.0px;top:227.03px;width:66.3px;height:19.03px;background:#8ade9c;"></div><div style="left:42.2px;top:226.53px;width:403.2px;height:1px;background:#9a6a3a;"></div><div style="left:42.2px;top:245.56px;width:403.2px;height:1px;background:#407f4b;"></div><div style="left:445.4px;top:245.61px;width:248.20000000000005px;height:0.9px;background:#2f6e3b;"></div><div style="left:42.2px;top:264.59000000000003px;width:403.2px;height:1px;background:#407f4b;"></div><div style="left:445.4px;top:264.64000000000004px;width:248.20000000000005px;height:0.9px;background:#2f6e3b;"></div><div style="left:42.2px;top:283.62px;width:403.2px;height:1px;background:#407f4b;"></div><div style="left:693.0px;top:227.03px;width:0.7px;height:57.09px;background:#4f9a5c;"></div><div style="left:41.550000000000004px;top:208.0px;width:1.3px;height:19.03px;background:#9a5424;"></div><div style="left:41.7px;top:227.03px;width:1px;height:57.09px;background:#407f4b;"></div><div style="left:246.04999999999998px;top:208.0px;width:1.3px;height:19.03px;background:#9a5424;"></div><div style="left:246.2px;top:227.03px;width:1px;height:57.09px;background:#407f4b;"></div><div style="left:312.35px;top:208.0px;width:1.3px;height:19.03px;background:#9a5424;"></div><div style="left:312.5px;top:227.03px;width:1px;height:57.09px;background:#407f4b;"></div><div style="left:378.65000000000003px;top:208.0px;width:1.3px;height:19.03px;background:#9a5424;"></div><div style="left:378.8px;top:227.03px;width:1px;height:57.09px;background:#407f4b;"></div><div style="left:444.75px;top:208.0px;width:1.3px;height:19.03px;background:#9a5424;"></div><div style="left:444.9px;top:246.06px;width:1px;height:38.06px;background:#407f4b;"></div><span class="t" style="left:45px;top:212px;font-size:12.4px;transform-origin:0 50%;transform:matrix(0.9847,0,0.001,1,0.00,0);color:#160b03;font-weight:bold;">Text</span><span class="t" style="left:249px;top:212px;font-size:12.4px;transform-origin:0 50%;transform:matrix(0.9818,0,0.001,1,0.90,0);color:#160b03;font-weight:bold;">Old Text</span><span class="t" style="left:316px;top:212px;font-size:12.4px;transform-origin:0 50%;transform:matrix(0.9866,0,0.001,1,0.10,0);color:#160b03;font-weight:bold;">New Text</span><span class="t" style="left:382px;top:212px;font-size:12.4px;transform-origin:0 50%;transform:matrix(1.0336,0,0.001,1,0.10,0);color:#160b03;font-weight:bold;">Instance</span><span class="t" style="left:448px;top:212px;font-size:12.4px;transform-origin:0 50%;transform:matrix(1.0080,0,0.001,1,0.30,0);color:#160b03;font-weight:bold;">Result</span><span class="t" style="left:44px;top:232px;font-size:12.8px;transform-origin:0 50%;transform:matrix(0.9817,0,0.001,1,0.70,0);color:#0c190d;">Excel Functions</span><span class="t" style="left:249px;top:232px;font-size:12.8px;transform-origin:0 50%;transform:matrix(1.0019,0,0.001,1,0.70,0);color:#0c190d;">Functions</span><span class="t" style="left:316px;top:232px;font-size:12.8px;transform-origin:0 50%;transform:matrix(1.0330,0,0.001,1,0.10,0);color:#0c190d;">Tutorial</span><span class="t" style="left:44px;top:251px;font-size:12.8px;transform-origin:0 50%;transform:matrix(0.9858,0,0.001,1,0.70,0);color:#0c190d;">Software Engineer Project Engineer</span><span class="t" style="left:249px;top:251px;font-size:12.8px;transform-origin:0 50%;transform:matrix(0.9836,0,0.001,1,0.70,0);color:#0c190d;">Engineer</span><span class="t" style="left:316px;top:251px;font-size:12.8px;transform-origin:0 50%;transform:matrix(1.0044,0,0.001,1,0.10,0);color:#0c190d;">Developer</span><span class="t" style="left:436px;top:251px;font-size:12.8px;transform-origin:0 50%;transform:matrix(1.0000,0,0.001,1,0.00,0);color:#0c190d;">1</span><span class="t" style="left:44px;top:270px;font-size:12.8px;transform-origin:0 50%;transform:matrix(0.9858,0,0.001,1,0.70,0);color:#0c190d;">Software Engineer Project Engineer</span><span class="t" style="left:249px;top:270px;font-size:12.8px;transform-origin:0 50%;transform:matrix(0.9836,0,0.001,1,0.70,0);color:#0c190d;">Engineer</span><span class="t" style="left:316px;top:270px;font-size:12.8px;transform-origin:0 50%;transform:matrix(1.0044,0,0.001,1,0.10,0);color:#0c190d;">Developer</span><span class="t" style="left:436px;top:270px;font-size:12.8px;transform-origin:0 50%;transform:matrix(1.0000,0,0.001,1,0.00,0);color:#0c190d;">2</span><div style="left:41.6px;top:226.83px;width:205.1px;height:19.830000000000002px;border:1.3px solid #78aee0;"></div><div style="left:246.7px;top:226.83px;width:66.3px;height:19.830000000000002px;border:1.3px solid #e0ae90;"></div><div style="left:313.0px;top:226.83px;width:66.3px;height:19.830000000000002px;border:1.3px solid #c4b0ec;"></div><div style="left:41px;top:226px;width:3px;height:3px;background:#5a8edc;opacity:0.9;"></div><div style="left:41px;top:245px;width:3px;height:3px;background:#5a8edc;opacity:0.9;"></div><div style="left:246px;top:226px;width:3px;height:3px;background:#e0645a;opacity:0.9;"></div><div style="left:246px;top:245px;width:3px;height:3px;background:#e0645a;opacity:0.9;"></div><div style="left:312px;top:226px;width:3px;height:3px;background:#a880e0;opacity:0.9;"></div><div style="left:312px;top:245px;width:3px;height:3px;background:#a880e0;opacity:0.9;"></div><div style="left:378px;top:226px;width:3px;height:3px;background:#a880e0;opacity:0.9;"></div><div style="left:378px;top:245px;width:3px;height:3px;background:#a880e0;opacity:0.9;"></div><span class="t" style="left:448px;top:232px;font-size:12.6px;transform-origin:0 50%;transform:matrix(0.8982,0,0.001,1,0.00,0);color:#0c190d;-webkit-text-stroke:0.3px currentColor;">=SUBSTITUTE(</span><span class="t" style="left:530.2px;top:231.96px;font-size:12.6px;color:#0c190d;transform-origin:0 50%;transform:matrix(0.9894,0,0.001,1,0,0);"><span style="color:#56a8e6">C2</span>,<span style="color:#e4906c">D2</span>,<span style="color:#9fa2e0">E2</span>)</span><svg style="left:436px;top:220px;" width="182" height="34" viewBox="0 0 182 34"><rect x="5.45" y="5.35" width="169.9" height="23.4" fill="none" stroke="#da2724" stroke-width="2.9"/></svg><div style="left:704.2px;top:188.8px;width:15.8px;height:213.7px;background:#161616;"></div><svg style="left:707px;top:192px;" width="10" height="7" viewBox="0 0 10 7"><path d="M5 1.2L8.6 6H1.4z" fill="#9a9a9a"/></svg><div style="left:708.8px;top:202.6px;width:6.3px;height:86.4px;background:#929292;border-radius:3.15px;"></div><svg style="left:707px;top:394px;" width="10" height="7" viewBox="0 0 10 7"><path d="M1.4 1h7.2L5 5.8z" fill="#9a9a9a"/></svg><div style="left:1px;top:401.8px;width:719px;height:26px;background:#141414;"></div><div style="left:0px;top:427.0px;width:720px;height:0.9px;background:#2c2c2c;"></div><div style="left:1px;top:427.9px;width:719px;height:16.1px;background:#141312;"></div><svg style="left:16px;top:407.3px;" width="10" height="10" viewBox="0 0 10 10"><path d="M6.400 1.600L3 5l3.400 3.400" fill="none" stroke="#9a9a9a" stroke-width="1.100" stroke-linecap="round" stroke-linejoin="round"/></svg><svg style="left:41px;top:407.3px;" width="10" height="10" viewBox="0 0 10 10"><path d="M3.600 1.600L7 5 3.600 8.400" fill="none" stroke="#9a9a9a" stroke-width="1.100" stroke-linecap="round" stroke-linejoin="round"/></svg><div style="left:82.2px;top:401.8px;width:4.2px;height:4px;background:#fff;"></div><div style="left:78.2px;top:401.8px;width:8.1px;height:8px;background:#141414;border-radius:0 3.5px 0 0;"></div><div style="left:130.6px;top:401.8px;width:4.2px;height:4px;background:#fff;"></div><div style="left:130.7px;top:401.8px;width:8.1px;height:8px;background:#141414;border-radius:3.5px 0 0 0;"></div><div style="left:86.2px;top:400.8px;width:44.6px;height:23.0px;background:#fff;border-radius:0 0 4.5px 4.5px;"></div><span class="t" style="left:92px;top:408px;font-size:10.8px;transform-origin:0 50%;transform:matrix(0.9232,0,0.001,1,0.70,0);color:#0a0a0a;-webkit-text-stroke:0.3px currentColor;">Sheet1</span><div style="left:93px;top:420px;width:32px;height:1px;background:#2d7a52;"></div><div style="left:93px;top:421px;width:32px;height:1px;background:rgba(45,122,82,0.45);"></div><div style="left:133.9px;top:408px;width:1px;height:13px;background:#3e3e3e;"></div><svg style="left:166px;top:408.8px;" width="10" height="10" viewBox="0 0 10 10"><path d="M5 1v8M1 5h8" stroke="#cfcfcf" stroke-width="1.100"/></svg><div style="left:434.3px;top:409.90000000000003px;width:1.5px;height:1.5px;background:#e0e0e0;border-radius:50%;"></div><div style="left:434.3px;top:413.3px;width:1.5px;height:1.5px;background:#e0e0e0;border-radius:50%;"></div><div style="left:434.3px;top:416.7px;width:1.5px;height:1.5px;background:#e0e0e0;border-radius:50%;"></div><svg style="left:451px;top:409.6px;" width="7" height="9" viewBox="0 0 7 9"><path d="M6 1L1 4.500 6 8z" fill="#b4b4b4"/></svg><div style="left:461px;top:411.0px;width:192.4px;height:6.2px;background:#a0a0a0;border-radius:3.100px;"></div><svg style="left:695.2px;top:409.6px;" width="7" height="9" viewBox="0 0 7 9"><path d="M1 0.800l5.600 3.700L1 8.200z" fill="#b4b4b4"/></svg><span class="t" style="left:9px;top:432px;font-size:8.5px;transform-origin:0 50%;transform:matrix(0.9149,0,0.001,1,0.50,0);color:#ececec;">Edit</span><svg style="left:45px;top:431px;" width="13" height="11" viewBox="0 0 13 11"><rect x="0.800" y="1" width="10.400" height="8.600" fill="none" stroke="#d0d0d0" stroke-width="1"/><path d="M0.800 3.600h10.400" stroke="#d0d0d0" stroke-width="0.900"/><circle cx="7.400" cy="7" r="2.600" fill="#181614" stroke="#d0d0d0" stroke-width="1"/><circle cx="7.400" cy="7" r="0.800" fill="#d0d0d0"/></svg><svg style="left:69px;top:430px;" width="13" height="13" viewBox="0 0 13 13"><circle cx="6.400" cy="2.400" r="1.300" fill="none" stroke="#e6e6e6" stroke-width="0.900"/><path d="M1.600 4.400l3 .8h3.600l3-.8M4.800 5.400v2.800L3 11.600M8 5.400v2.800l1.600 3.400M8.400 9.800l1.400 1.400 2.400-2.600" fill="none" stroke="#e6e6e6" stroke-width="0.950" stroke-linecap="round" stroke-linejoin="round"/></svg><span class="t" style="left:83px;top:432px;font-size:8.5px;transform-origin:0 50%;transform:matrix(0.9412,0,0.001,1,0.60,0);color:#ececec;">Accessibility: Good to go</span><svg style="left:491.3px;top:430.2px;" width="11" height="11" viewBox="0 0 11 11"><rect x="0.700" y="0.700" width="9.600" height="9.600" fill="none" stroke="#6c6c6c" stroke-width="1"/><path d="M0.700 3.900h9.600M0.700 7.100h9.600M3.900 0.700v9.600M7.100 0.700v9.600" stroke="#6c6c6c" stroke-width="0.900"/></svg><svg style="left:522.3px;top:430.2px;" width="11" height="11" viewBox="0 0 11 11"><rect x="0.700" y="0.700" width="9.600" height="9.600" fill="none" stroke="#6c6c6c" stroke-width="1"/><rect x="3.300" y="3" width="4.400" height="5" fill="none" stroke="#6c6c6c" stroke-width="0.900"/><path d="M3.300 5.500h4.400" stroke="#6c6c6c" stroke-width="0.800"/></svg><svg style="left:553.0px;top:430.2px;" width="11" height="11" viewBox="0 0 11 11"><path d="M0.700 0.700v9.600h9.600V0.700zM3.600 0.700v4.600h3.800V0.700" fill="none" stroke="#6c6c6c" stroke-width="1"/></svg><div style="left:579.0px;top:435.7px;width:5.4px;height:0.9px;background:#6c6c6c;"></div><div style="left:589px;top:435.7px;width:76.3px;height:1px;background:#b4b4b4;"></div><div style="left:626.5px;top:433.4px;width:1.3px;height:5.6px;background:#d0d0d0;"></div><svg style="left:669.6px;top:432.2px;" width="8" height="8" viewBox="0 0 8 8"><path d="M4 0.800v6.400M0.800 4h6.400" stroke="#6c6c6c" stroke-width="0.900"/></svg><span class="t" style="left:685px;top:432px;font-size:8.4px;transform-origin:0 50%;transform:matrix(0.9402,0,0.001,1,0.90,0);color:#6a6a6a;">100%</span></div></body></html>
